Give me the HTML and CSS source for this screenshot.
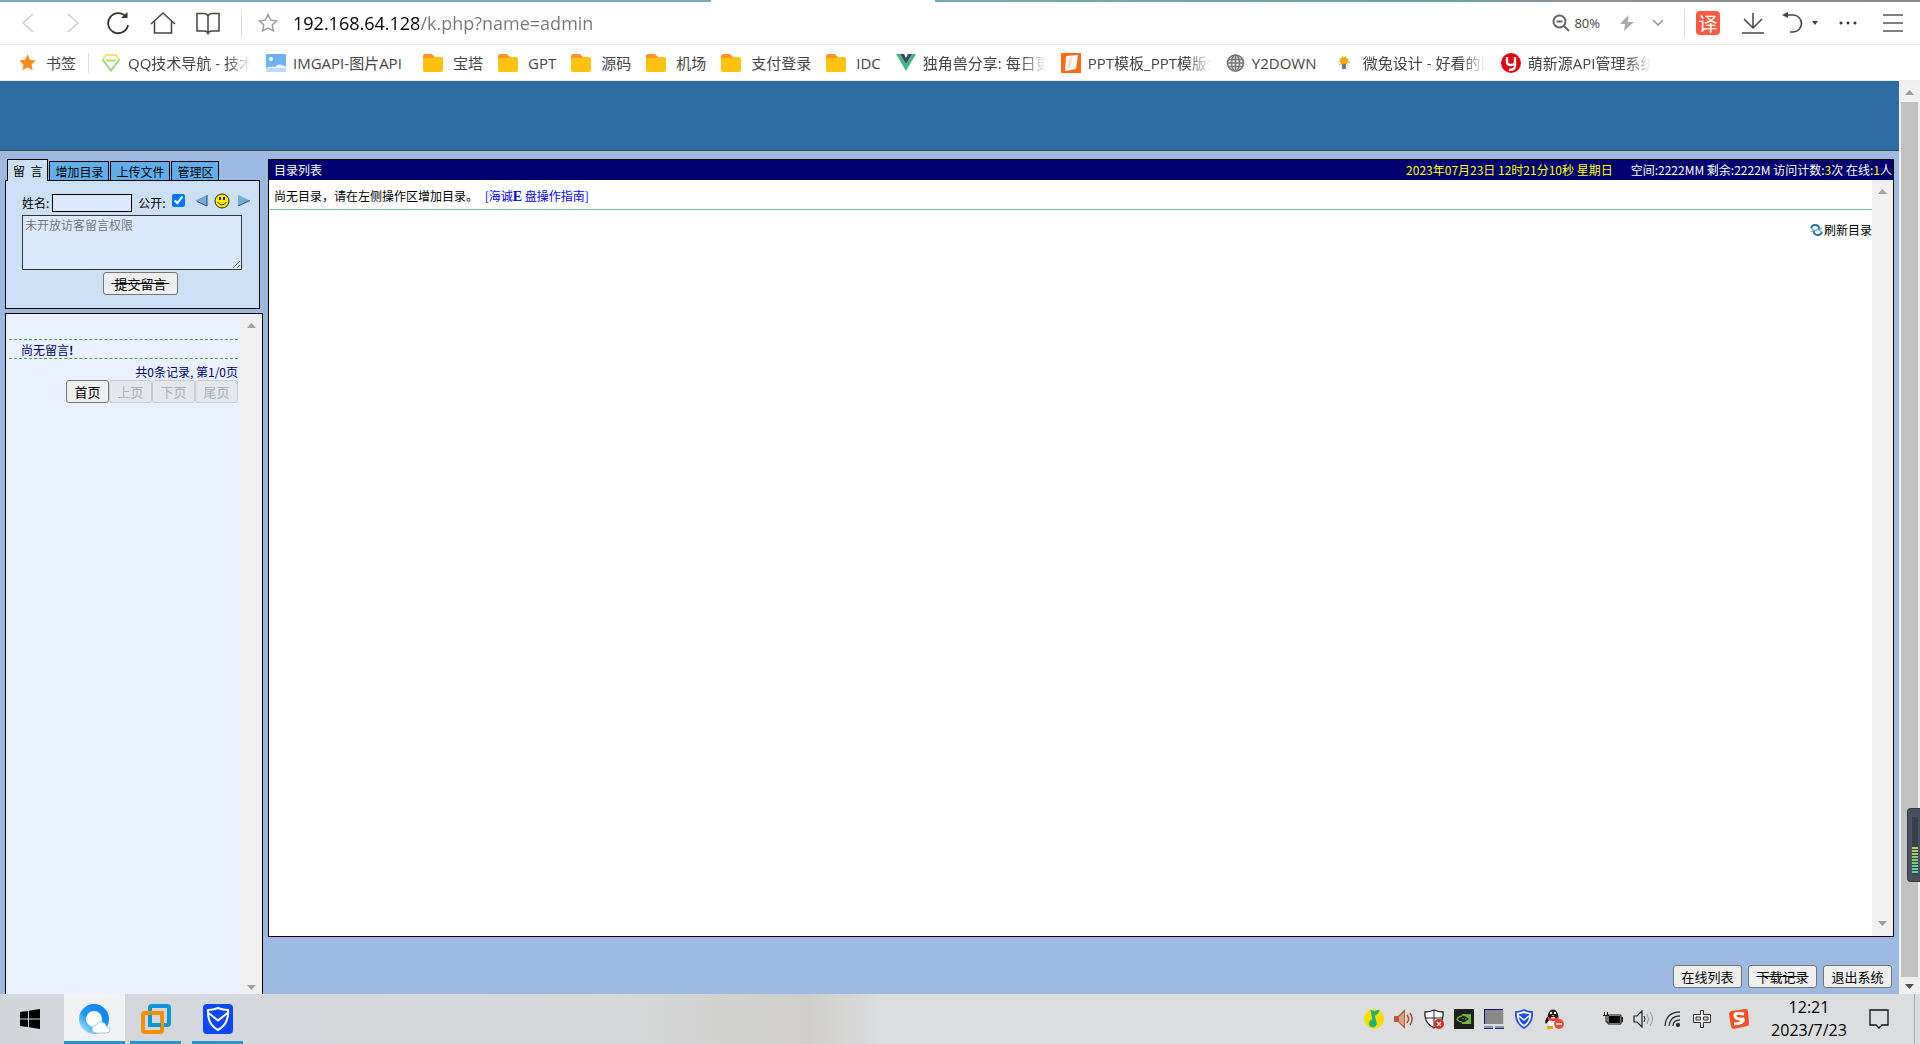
FILE: index.html
```html
<!DOCTYPE html>
<html lang="zh-CN">
<head>
<meta charset="utf-8">
<title>目录列表</title>
<link rel="stylesheet" href="styles.css">
</head>
<body>
<svg class="defs" width="0" height="0" aria-hidden="true">
  <symbol id="folder" viewBox="0 0 20 18"><path d="M0 2q0-2 2-2h7l3 3h6v4H0z" fill="#ff9326"/><path d="M0 4h10l2-1h6q2 0 2 2v11q0 2-2 2H2q-2 0-2-2z" fill="#ffc20e"/></symbol>
  <symbol id="up" viewBox="0 0 9 5"><path d="M0 5L4.500 0 9 5z" fill="currentColor"/></symbol>
  <symbol id="down" viewBox="0 0 9 5"><path d="M0 0L4.500 5 9 0z" fill="currentColor"/></symbol>
</svg>
<header class="chrome">
  <div class="strip"><i class="tab-a"></i><i class="tab-on"></i><i class="tab-b"></i></div>
  <div class="toolbar">
    <nav class="nav-buttons">
      <button class="tool" aria-label="后退"><svg width="22" height="22" fill="none" stroke="#ccc" stroke-width="1.500"><path d="M16 2L6 11l10 9"/></svg></button>
      <button class="tool" aria-label="前进"><svg width="22" height="22" fill="none" stroke="#ccc" stroke-width="1.500"><path d="M6 2l10 9L6 20"/></svg></button>
      <button class="tool" aria-label="刷新"><svg width="24" height="24" fill="none" stroke="#333" stroke-width="1.800"><path d="M20 6a10 10 0 1 0 2 8"/><path d="M15 7h6.500V1z" fill="#333" stroke="none"/></svg></button>
      <button class="tool" aria-label="主页"><svg width="26" height="24" fill="none" stroke="#444" stroke-width="1.500"><path d="M1 13L13 2l12 11M4.500 10.500V22h17V10.500"/></svg></button>
      <button class="tool" aria-label="阅读"><svg width="24" height="24" fill="none" stroke="#444" stroke-width="1.500"><path d="M12 5q-1-2.500-4-2.500H1V20h7q3 0 4 2.500 1-2.500 4-2.500h7V2.500h-7q-3 0-4 2.500zv17"/></svg></button>
    </nav>
    <span class="rule"></span>
    <svg width="20" height="20" viewBox="0 0 20 20" fill="none" stroke="#999" stroke-width="1.400"><path d="M10 1.500l2.600 5.600 6.100.7-4.500 4.200 1.200 6-5.400-3-5.400 3 1.200-6L1.300 7.800l6.100-.7z"/></svg>
    <input class="address" type="text" aria-label="地址" value="192.168.64.128/k.php?name=admin">
    <div class="tools-right">
      <button class="zoom"><svg width="18" height="18" fill="none" stroke="#666" stroke-width="2"><circle cx="7.500" cy="7.500" r="6"/><path d="M4.500 7.500h6M12 12l5 5"/></svg>80%</button>
      <button class="tool bolt" aria-label="加速"><svg width="16" height="16" fill="#aaa"><path d="M9.500 0L1 9h5l-1 7 10-9H9z"/></svg></button>
      <button class="tool chev" aria-label="更多"><svg width="12" height="8" fill="none" stroke="#888" stroke-width="1.300"><path d="M1 1l5 5 5-5"/></svg></button>
      <span class="rule"></span>
      <button class="translate">译</button>
      <button class="tool" aria-label="下载"><svg width="22" height="22" fill="none" stroke="#444" stroke-width="1.500"><path d="M11 1v15M2 7l9 9 9-9M0 21h22"/></svg></button>
      <button class="tool undo" aria-label="撤销"><svg width="36" height="22" fill="none" stroke="#444" stroke-width="1.600"><path d="M2 3h9a8.500 8.500 0 0 1 0 17H8"/><path d="M0 3l6-3v6z" fill="#444" stroke="none"/><path d="M30 9h6l-3 4z" fill="#444" stroke="none"/></svg></button>
      <button class="tool" aria-label="菜单"><svg width="20" height="6" fill="#333"><circle cx="3" cy="3" r="1.500"/><circle cx="10" cy="3" r="1.500"/><circle cx="17" cy="3" r="1.500"/></svg></button>
      <button class="tool" aria-label="主菜单"><svg width="20" height="18" fill="none" stroke="#555" stroke-width="1.500"><path d="M0 1h20M0 9h20M0 17h20"/></svg></button>
    </div>
  </div>
  <nav class="bookmarks">
    <a href="#" class="mark first"><svg width="17" height="17" viewBox="0 0 20 20"><path d="M10 .5l2.900 6.300 6.800.8-5 4.700 1.300 6.900-6-3.400-6 3.400 1.300-6.900-5-4.700 6.800-.8z" fill="#ff8a16"/></svg>书签</a>
    <span class="rule"></span>
    <a href="#" class="mark tight"><svg width="20" height="18" fill="none" stroke-width="2"><path d="M1.500 6L5 1h10l3.500 5" stroke="#f3e56b"/><path d="M1.500 5.500L10 16.500l8.500-11" stroke="#8fdc7e"/><path d="M5 6.500h10" stroke="#b8dd63"/></svg><span class="clip">QQ技术导航 - 技术</span></a>
    <a href="#" class="mark tight"><svg width="20" height="18"><path d="M0 0h20v18H0z" fill="#6db1f8"/><circle cx="5" cy="5" r="2" fill="#fff"/><path d="M0 14q5-2 9-1 4-5 11 0v2H0z" fill="#fff"/><path d="M0 14h20v4H0z" fill="#b9dcff"/></svg><span class="long">IMGAPI-图片API</span></a>
    <a href="#" class="mark"><svg width="20" height="18"><use href="#folder"/></svg>宝塔</a>
    <a href="#" class="mark"><svg width="20" height="18"><use href="#folder"/></svg>GPT</a>
    <a href="#" class="mark"><svg width="20" height="18"><use href="#folder"/></svg>源码</a>
    <a href="#" class="mark"><svg width="20" height="18"><use href="#folder"/></svg>机场</a>
    <a href="#" class="mark"><svg width="20" height="18"><use href="#folder"/></svg>支付登录</a>
    <a href="#" class="mark"><svg width="20" height="18"><use href="#folder"/></svg>IDC</a>
    <a href="#" class="mark tight"><svg width="20" height="17"><path d="M0 0h4l6 10 6-10h4L10 17z" fill="#41b883"/><path d="M4 0h4l2 4 2-4h4l-6 10z" fill="#35495e"/></svg><span class="clip">独角兽分享: 每日更新</span></a>
    <a href="#" class="mark tight"><svg width="20" height="20"><path d="M0 0h20v20H0z" fill="#ff6a13"/><path d="M5 3l12-1-2 14-11 2z" fill="#fff"/><path d="M8 5l3-1-2 10-3 2z" fill="#ffd9c2"/></svg><span class="clip">PPT模板_PPT模版免费</span></a>
    <a href="#" class="mark tight"><svg width="19" height="18" fill="none" stroke="#777" stroke-width="1.700"><circle cx="9.500" cy="9" r="8"/><ellipse cx="9.500" cy="9" rx="4" ry="8"/><path d="M9.500 1v16M2 5.500h15M1 9h17M2 12.500h15"/></svg><span class="short">Y2DOWN</span></a>
    <a href="#" class="mark"><svg width="18" height="18"><circle cx="9" cy="8" r="5" fill="#fff" stroke="#bbb" stroke-dasharray="1 2" stroke-width="2"/><circle cx="9" cy="7" r="4" fill="#f2a900"/><path d="M7 10h4v5H7z" fill="#7a776a"/></svg><span class="clip">微兔设计 - 好看的网站</span></a>
    <a href="#" class="mark tight"><svg width="20" height="20"><circle cx="10" cy="10" r="10" fill="#e60012"/><path d="M6 4v5q0 3 4 3 3 0 4-2V4v9q0 4-6 4" fill="none" stroke="#fff" stroke-width="2.400"/></svg><span class="clip">萌新源API管理系统</span></a>
  </nav>
</header>
<div class="viewport">
  <div class="page">
    <div class="banner"></div>
    <div class="columns">
      <aside class="side">
        <div class="tabs">
          <button class="tab active">留&nbsp; 言</button><button class="tab">增加目录</button><button class="tab">上传文件</button><button class="tab">管理区</button>
        </div>
        <form class="compose">
          <div class="who">
            <label for="who">姓名:</label><input id="who" class="name" type="text">
            <label for="open" class="open">公开:</label><input id="open" class="check" type="checkbox" checked>
            <button type="button" class="face" aria-label="上一个"><svg width="13" height="13"><path d="M12 1v11L0 6.500z" fill="#6faed0"/><path d="M12 1v11L2 7.500" fill="none" stroke="#1f4b88"/></svg></button>
            <svg width="16" height="16"><circle cx="8" cy="8" r="7" fill="#ffee00" stroke="#222"/><path d="M5 4h2v3H5zM9 4h2v3H9z" fill="#222"/><path d="M3.500 9q4.500 6 9 0" fill="none" stroke="#222"/></svg>
            <button type="button" class="face" aria-label="下一个"><svg width="13" height="13"><path d="M1 1v11l12-5.500z" fill="#6faed0"/><path d="M1 12l12-5.500" fill="none" stroke="#1f4b88"/></svg></button>
          </div>
          <textarea class="message" aria-label="留言" placeholder="未开放访客留言权限"></textarea>
          <button type="button" class="btn submit">&nbsp;提交留言&nbsp;</button>
        </form>
        <section class="notes">
          <div class="notes-body">
            <p class="empty">尚无留言<b>!</b></p>
            <p class="count">共0条记录, 第1/0页</p>
            <div class="pager"><button class="btn">首页</button><button class="btn" disabled>上页</button><button class="btn" disabled>下页</button><button class="btn" disabled>尾页</button></div>
          </div>
          <div class="bar faint"><svg width="9" height="5"><use href="#up"/></svg><svg width="9" height="5"><use href="#down"/></svg></div>
        </section>
      </aside>
      <main class="main">
        <section class="listing">
          <div class="title"><h1>目录列表</h1><span class="date">2023年07月23日 12时21分10秒 星期日</span><span class="stats">空间:2222MM 剩余:2222M 访问计数:<em>3</em>次 在线:<em>1</em>人</span></div>
          <div class="files">
            <div class="files-body">
              <p class="hint">尚无目录，请在左侧操作区增加目录。 <a href="#">[海诚<b>E</b> 盘操作指南]</a></p>
              <a href="#" class="refresh"><svg width="13" height="12" fill="none" stroke="#246d8c" stroke-width="1.800"><path d="M1 4q1-3 4-3 3 0 4 2v3M12 8q-1 3-4 3-3 0-4-2V6"/><path d="M1 4l3 2M6 5l3 1 3-2M12 8L9 6M7 7L4 6 1 8" stroke="#6ab0ca" stroke-width="1.300"/></svg>刷新目录</a>
            </div>
            <div class="bar faint"><svg width="9" height="5"><use href="#up"/></svg><svg width="9" height="5"><use href="#down"/></svg></div>
          </div>
        </section>
        <div class="actions"><button class="btn">在线列表</button><button class="btn"><s>下载记录</s></button><button class="btn">退出系统</button></div>
      </main>
    </div>
  </div>
  <div class="bar window-bar"><svg class="faint" width="9" height="5"><use href="#up"/></svg><i class="thumb"></i><svg width="9" height="5"><use href="#down"/></svg></div>
  <div class="gauge"><i></i></div>
</div>
<footer class="taskbar">
  <button class="start" aria-label="开始"><svg width="20" height="20"><path d="M0 3l8-1v7.500H0zM9 1.800L20 0v9.500H9zM0 10.500h8V18l-8-1zM9 10.500h11V20L9 18.200z"/></svg></button>
  <button class="app current" aria-label="QQ浏览器"><svg width="32" height="30"><defs><linearGradient id="qb" x1="1" y1="0" x2="0" y2="1"><stop offset="0" stop-color="#0a84ff"/><stop offset=".6" stop-color="#1f9af0"/><stop offset="1" stop-color="#9be0fb"/></linearGradient></defs><circle cx="15" cy="15" r="11.500" fill="#fff" stroke="url(#qb)" stroke-width="7"/><path d="M17 29q-4 0-4-4 0-3 4-4 2-4 6-3 4 1 4 4 4 1 4 4 0 3-4 3z" fill="#fff" stroke="#9fc3e6"/></svg></button>
  <button class="app" aria-label="VMware"><svg width="30" height="30" fill="none" stroke-width="4"><rect x="9" y="2" width="19" height="19" rx="2" stroke="#0d96d6"/><rect x="2" y="9" width="19" height="19" rx="2" stroke="#f58f00"/><path d="M9 14v7h11" stroke="#0d96d6"/><path d="M9 9h12v5" stroke="#f58f00"/></svg></button>
  <button class="app" aria-label="电脑管家"><svg width="30" height="30"><rect width="30" height="30" rx="4" fill="#0a47ff"/><path d="M15 4q5 2 10 2 1 14-10 20Q4 20 5 6q5 0 10-2zM5.500 9L15 16.500 24.500 9" fill="none" stroke="#fff" stroke-width="2"/></svg></button>
  <div class="tray">
    <svg width="20" height="20"><circle cx="10" cy="10" r="10" fill="#ffdc00"/><path d="M7 1q2 3 8 0-1 5-5 5l2 7a3.500 3.500 0 1 1-3-2z" fill="#12b57c" stroke="#12b57c"/></svg>
    <svg width="20" height="20"><path d="M0 7h4l7-7v20l-7-7H0z" fill="#b85a3c"/><path d="M5 8l5-5v14l-5-4z" fill="#e0a080"/><path d="M13 6q3 4 0 8M16 4q4 6 0 12" fill="none" stroke="#a04028" stroke-width="1.400"/></svg>
    <svg width="20" height="20"><path d="M10 1q4 2 9 2 1 11-9 16Q0 14 1 3q5 0 9-2z" fill="#fff" stroke="#222" stroke-width="1.300"/><path d="M10 1v18M1 9h18" stroke="#222"/><circle cx="15" cy="15" r="5" fill="#dc2626"/><path d="M13 13l4 4M17 13l-4 4" stroke="#fff" stroke-width="1.300"/></svg>
    <svg width="20" height="20"><path d="M0 0h20v20H0z" fill="#1c211c"/><path d="M8 5h9v10H8z" fill="#6fb536"/><path d="M3 10q5-5 11 0-6 5-11 0zm3 0q3-3 5 0-2 2-5 0z" fill="none" stroke="#1c211c" stroke-width="1.300"/><path d="M8 7q-3 0-5 3 2 3 5 3" fill="none" stroke="#6fb536" stroke-width="1.300"/></svg>
    <svg width="20" height="20"><path d="M0 0h20v15H0z" fill="#c8c8cc"/><path d="M0 0h19v1H1v14H0z" fill="#10107a"/><path d="M1 1h18v14H1z" fill="#888"/><path d="M0 17h9v2H0zM11 17h9v2h-9z" fill="#8a93ad"/><path d="M0 19h9v1H0zM11 19h9v1h-9z" fill="#24248a"/></svg>
    <svg width="20" height="20"><path d="M10 1q4 2 8 2 1 11-8 16Q1 14 2 3q4 0 8-2z" fill="#fff" stroke="#1c50e8" stroke-width="1.800"/><path d="M10 4q2 1 5 1 1 7-5 11Q4 12 5 5q3 0 5-1z" fill="#1c50e8"/><path d="M5 7l5 4 5-4" fill="none" stroke="#fff" stroke-width="1.500"/></svg>
    <svg width="20" height="20"><ellipse cx="9" cy="8" rx="5.500" ry="7.500" fill="#111"/><path d="M3 8Q0 13 2 15l3-4 9 1z" fill="#111"/><ellipse cx="9" cy="13" rx="4.500" ry="5" fill="#fff"/><path d="M4 8q5 3 10 0v3q-5 2-10 0z" fill="#e32"/><circle cx="7" cy="4" r="1.200" fill="#fff"/><circle cx="11" cy="4" r="1.200" fill="#fff"/><path d="M7 6h4l-2 1.500zM3 17h6v3H3z" fill="#f90"/><circle cx="15" cy="15" r="5" fill="#f0483c"/><path d="M12 15h6" stroke="#fff" stroke-width="1.500"/></svg>
    <svg class="sys" width="20" height="14"><path d="M5 3h13v9H5z" fill="none" stroke="#111"/><path d="M6 4h11v7H6z"/><path d="M18.500 5h1.500v5h-1.500z"/><path d="M1.500 0v3.500h3V0M0 3.500h6M3 4v6h2" fill="none" stroke="#111"/></svg>
    <svg width="21" height="18" fill="none" stroke="#222"><path d="M1 6h3l5-5v16l-5-5H1z" stroke-width="1.200"/><path d="M11 6q2 3 0 6"/><path d="M14 4q3 5 0 10M17 2q5 7 0 14" stroke="#999"/></svg>
    <svg width="18" height="18" fill="none" stroke="#333" stroke-width="1.300"><path d="M1 16Q2 2 16 2M5 16Q6 6 16 6M9 16q0-6 7-6"/><circle cx="14" cy="15" r="1.500" fill="#222"/></svg>
    <svg width="20" height="20" fill="#eee" stroke="#333"><path d="M8.500 1.500h3v4h7v8h-7v5h-3v-5h-7v-8h7zM4 8v3h4.500V8zM11.500 8v3H16V8z"/></svg>
    <svg class="sogou" width="20" height="20"><path d="M2 2l15-2q2 0 2 2l1 13q0 2-2 2L5 20q-2 0-3-2L0 5q0-2 2-3z" fill="#f4511e"/><path d="M15 5Q5 3 6 7t8 3q2 4-9 5" fill="none" stroke="#fff" stroke-width="3"/></svg>
    <time class="clock"><span>12:21</span><span>2023/7/23</span></time>
    <svg class="notice" width="20" height="21" fill="none" stroke="#111" stroke-width="1.300"><path d="M1 1h18v15h-6l-3 3-3-3H1z"/></svg>
    <i class="edge"></i>
  </div>
</footer>
</body>
</html>
```
FILE: styles.css
```css
* { box-sizing: border-box; }
body {
  margin: 0;
  height: 100vh;
  display: flex;
  flex-direction: column;
  overflow: hidden;
  background: #9cbae1;
  font: 12px/16px "Noto Sans CJK SC", sans-serif;
  color: #000;
}
button, input, textarea { font: inherit; color: inherit; }
button { padding: 0; border: 0; background: none; }
svg { flex: none; display: block; }
p, h1 { margin: 0; font: inherit; }
a { text-decoration: none; }
.defs { position: absolute; }

/* Browser frame */
.chrome { background: #fff; color: #444; flex: none; border-bottom: 1px solid #eee; }
.strip { display: flex; height: 2px; }
.tab-a { flex: 711; background: #71adb8; }
.tab-on { flex: 224; background: #fff; }
.tab-b { flex: 985; background: linear-gradient(90deg, #71adb8, #64a7b0 50%, #918f96 65%, #8a8890); }
.toolbar { display: flex; align-items: center; height: 43px; border-bottom: 1px solid #eaeaea; padding-left: 5px; }
.nav-buttons { display: flex; }
.tool { display: grid; place-items: center; width: 45px; height: 30px; }
.rule { width: 1px; height: 28px; background: #ddd; }
.nav-buttons + .rule { margin: 0 16px 0 11px; }
.address {
  flex: 1;
  min-width: 0;
  height: 32px;
  margin-left: 15px;
  border: 0;
  padding: 0;
  font: 18px/32px "Open Sans", sans-serif;
  background: linear-gradient(90deg, #000 127px, #777 127px);
  background-clip: text;
  -webkit-text-fill-color: transparent;
}
.tools-right { display: flex; align-items: center; padding-right: 5px; }
.zoom { display: flex; align-items: center; gap: 4px; font: 13px/20px "Open Sans", sans-serif; margin-right: 12px; }
.tool.bolt { width: 30px; }
.tool.chev { width: 32px; }
.chev + .rule { margin: 0 11px 0 10px; }
.translate { width: 24px; height: 24px; border-radius: 4px; background: #fb5b41; color: #fff; font-size: 19px; line-height: 22px; margin-right: 10px; }
.tool.undo { width: 50px; }
.bookmarks { display: flex; align-items: center; height: 35px; gap: 15px; padding-left: 19px; font: 15px/24px "Open Sans", "Noto Sans CJK SC", sans-serif; white-space: nowrap; }
.bookmarks .rule { height: 20px; margin: 0 -3px; }
.mark { display: flex; align-items: center; gap: 10px; color: #444; }
.mark.tight { gap: 7px; }
.clip { width: 123px; overflow: hidden; mask-image: linear-gradient(90deg, #000 80%, transparent); }
.long { min-width: 115px; }
.short { min-width: 68px; }

/* Scrollbars */
.bar { width: 21px; flex: none; display: flex; flex-direction: column; align-items: center; justify-content: space-between; background: #f0f0f0; color: #505050; padding: 9px 0 4px; }
.faint { color: #a0a0a0; }
.window-bar { gap: 7px; padding-bottom: 5px; }
.thumb { flex: 1; width: 17px; background: #c1c1c1; }

/* Page */
.viewport { flex: 1; min-height: 0; display: flex; position: relative; }
.page { flex: 1; min-width: 0; display: flex; flex-direction: column; }
.banner { height: 70px; flex: none; background: #2e6ca2; border-bottom: 1px solid #444; }
.columns { flex: 1; min-height: 0; display: flex; gap: 5px; padding: 8px 5px 0; }
.side { width: 258px; flex: none; display: flex; flex-direction: column; }
.tabs { display: flex; align-items: flex-end; gap: 1px; height: 22px; padding-left: 2px; }
.tab { height: 20px; padding: 0 5px; line-height: 20px; border: 1px solid #000; background: #60afe8; }
.tab.active { height: 22px; background: #cbe0f4; border-bottom: 0; position: relative; z-index: 1; }
.compose { width: 255px; height: 129px; margin-top: -1px; border: 1px solid #000; background: #cbe0f4; padding: 11px 16px 0; display: flex; flex-direction: column; gap: 2px; }
.who { display: flex; align-items: center; height: 21px; white-space: nowrap; }
.who > * { flex: none; }
.name { width: 80px; height: 18px; margin-left: 3px; border: 1px solid #000; background: #dceaff; padding: 0 2px; }
.open { margin-left: 6px; }
.check { width: 13px; height: 13px; margin: 0 10px 4px 6px; accent-color: #0075ff; }
.who svg { margin-bottom: 4px; }
.face + svg { margin: 0 7px 4px 6px; }
.message { width: 220px; height: 55px; border: 1px solid #333; background: #dceaff; padding: 1px 2px; line-height: 16px; }
.message::placeholder { color: #757575; }
.btn { height: 23px; padding: 0 7px; border: 1px solid #767676; border-radius: 3px; background: #efefef; font-size: 13px; line-height: 20px; }
.submit { align-self: center; margin-left: 16px; padding: 0 8px; text-decoration: line-through; }
.notes { flex: 1; min-height: 0; margin-top: 4px; border: 1px solid #000; border-bottom: 0; background: #e9f0ff; display: flex; color: #000070; }
.notes-body { flex: 1; padding: 25px 3px 0; }
.empty { border: dashed #4a9e4a; border-width: 1px 0; padding: 2px 12px 1px; line-height: 16px; height: 20px; }
.count { text-align: right; line-height: 16px; margin: 5px 0 0; }
.pager { display: flex; justify-content: flex-end; color: #000; }
.pager .btn { width: 43px; }
.pager .btn:disabled { color: #aab0b8; border-color: #c8ccd4; background: #e4e8ee; }
.main { flex: 1; min-width: 0; display: flex; flex-direction: column; padding-bottom: 6px; }
.listing { flex: 1; min-height: 0; display: flex; flex-direction: column; border: 1px solid #000; background: #fff; }
.title { display: flex; height: 20px; line-height: 20px; padding: 0 1px 0 5px; background: #000070; color: #fff; }
.title h1 { flex: 1; }
.date { color: #ff0; margin-right: 18px; }
.stats em { color: #ff0; font-style: normal; }
.files { flex: 1; min-height: 0; display: flex; }
.files .bar { padding-bottom: 10px; }
.files-body { flex: 1; display: flex; flex-direction: column; }
.hint { height: 30px; padding: 7px 5px 0; border-bottom: 1px solid #7abf9d; line-height: 18px; }
.hint a { color: #00f; margin-left: 4px; }
.hint b { font: bold 14px "Liberation Serif", serif; }
.refresh { align-self: flex-end; display: flex; align-items: center; gap: 1px; color: #000; margin-top: 12px; }
.actions { display: flex; justify-content: flex-end; gap: 6px; padding: 28px 2px 0 0; }
.actions .btn { width: 69px; padding: 0; }
.gauge { position: absolute; right: 0; top: 727px; width: 13px; height: 74px; border: 1px solid #343843; border-right: 0; border-radius: 4px 0 0 4px; background: #4a4f60; padding: 8px 2px 7px 4px; }
.gauge i { display: block; height: 100%; background: repeating-linear-gradient(transparent 0 2px, #3a3f4c 2px 3px), linear-gradient(#3a3f4c 52%, #c8cf4e 53%, #72d27c 80%, #40d8c0); }

/* Taskbar */
.taskbar { flex: none; height: 50px; display: flex; align-items: stretch; background: linear-gradient(90deg, #d2d6db, #d8dadc 30%, #cfcecb 42%, #dcdddf 46%, #dcdddf); }
.start { display: grid; place-items: center; width: 60px; margin-right: 4px; }
.app { display: grid; place-items: center; width: 51px; margin-right: 11px; border-bottom: 3px solid #2894d2; padding-top: 3px; }
.app.current { width: 61px; margin-right: 5px; background: #f0f2f3; }
.tray { margin-left: auto; display: flex; align-items: center; gap: 10px; padding-right: 5px; }
.sys { margin-left: 29px; }
.sogou { margin-left: 7px; }
.clock { width: 100px; display: flex; flex-direction: column; text-align: center; font: 16px/23px "Open Sans", sans-serif; }
.notice { margin-right: 15px; }
.edge { width: 1px; align-self: stretch; background: #aaa; }
```
